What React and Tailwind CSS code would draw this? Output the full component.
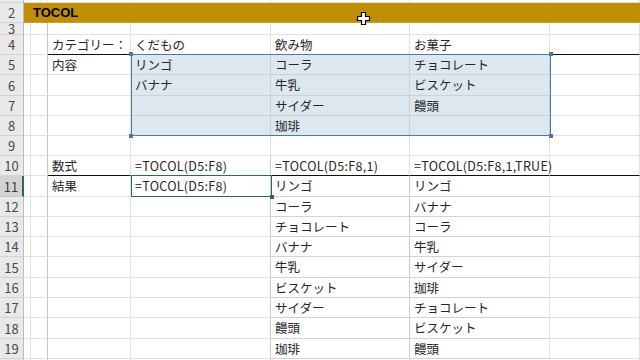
import React from 'react';

// column widths, A..G (row header is drawn separately)
const COLS = [
  { key: 'A', w: 'w-[7px]' },
  { key: 'B', w: 'w-[17px]' },
  { key: 'C', w: 'w-[83px]' },
  { key: 'D', w: 'w-[140px]' },
  { key: 'E', w: 'w-[139px]' },
  { key: 'F', w: 'w-[140px]' },
  { key: 'G', w: 'flex-1' },
];

// rows 1 and 20 are only a sliver at the edges, so no number is shown for them
const ROWS = [
  { n: 1, h: 'h-[3px]', hideNum: true },
  { n: 2, h: 'h-[20px]', B: 'TOCOL' },
  { n: 3, h: 'h-[12px]' },
  { n: 4, h: 'h-[20px]', C: 'カテゴリー：', D: 'くだもの', E: '飲み物', F: 'お菓子' },
  { n: 5, h: 'h-[20px]', C: '内容', D: 'リンゴ', E: 'コーラ', F: 'チョコレート' },
  { n: 6, h: 'h-[21px]', D: 'バナナ', E: '牛乳', F: 'ビスケット' },
  { n: 7, h: 'h-[20px]', E: 'サイダー', F: '饅頭' },
  { n: 8, h: 'h-[20px]', E: '珈琲' },
  { n: 9, h: 'h-[20px]' },
  { n: 10, h: 'h-[20px]', C: '数式', D: '=TOCOL(D5:F8)', E: '=TOCOL(D5:F8,1)', F: '=TOCOL(D5:F8,1,TRUE)' },
  { n: 11, h: 'h-[21px]', C: '結果', D: '=TOCOL(D5:F8)', E: 'リンゴ', F: 'リンゴ' },
  { n: 12, h: 'h-[20px]', E: 'コーラ', F: 'バナナ' },
  { n: 13, h: 'h-[20px]', E: 'チョコレート', F: 'コーラ' },
  { n: 14, h: 'h-[20px]', E: 'バナナ', F: '牛乳' },
  { n: 15, h: 'h-[21px]', E: '牛乳', F: 'サイダー' },
  { n: 16, h: 'h-[20px]', E: 'ビスケット', F: '珈琲' },
  { n: 17, h: 'h-[20px]', E: 'サイダー', F: 'チョコレート' },
  { n: 18, h: 'h-[21px]', E: '饅頭', F: 'ビスケット' },
  { n: 19, h: 'h-[20px]', E: '珈琲', F: '饅頭' },
  { n: 20, h: 'h-[20px]', hideNum: true },
];

const inSel = (n, c) => n >= 5 && n <= 8 && ['D', 'E', 'F'].includes(c);

function cellClass(n, c) {
  if (n === 2) return 'bg-[#bf8f00] border-b border-b-[#c99f2a]';

  let bg = 'bg-white';
  let right = 'border-r-[#e2e2e2]';
  let bottom = 'border-b-[#e2e2e2]';

  if (inSel(n, c)) {
    bg = 'bg-[#dde7f0]';
    right = 'border-r-[#c7d2dc]';
    bottom = 'border-b-[#c7d2dc]';
  }
  if (c === 'B' && n >= 3) right = 'border-r-[#c4c4c4]';
  if ((c === 'D' && n >= 10) || (c === 'E' && n >= 11)) right = 'border-r-[#cdcdcd]';
  if ((c === 'E' || c === 'F') && n >= 11) bottom = 'border-b-[#d2d2d2]';
  if ((n === 4 || n === 10) && ['C', 'D', 'E', 'F', 'G'].includes(c)) bottom = 'border-b-[#111]';

  return `${bg} border-r border-b ${right} ${bottom}`;
}

function RowHeader({ row }) {
  const active = row.n === 11;
  return (
    <div
      className={
        active
          ? 'w-[24px] h-full shrink-0 flex items-center justify-center overflow-hidden bg-[#d3d3d3] border-b border-b-[#c8c8c8] border-r-2 border-r-[#217346] text-[13px] text-[#3c3c3c]'
          : 'w-[24px] h-full shrink-0 flex items-center justify-center overflow-hidden bg-[#e9e9e9] border-b border-b-[#d2d2d2] border-r border-r-[#bcbcbc] text-[13px] text-[#4a4a4a]'
      }
    >
      {!row.hideNum && row.n}
    </div>
  );
}

function CellText({ n, text }) {
  if (n === 2) {
    return (
      <span className="relative z-10 pl-[2px] font-bold text-[13px] text-black font-['Liberation_Sans',sans-serif]">
        {text}
      </span>
    );
  }
  // formulas are latin only and run a little wider than the kana
  const latin = text.startsWith('=');
  return (
    <span
      className={
        latin
          ? 'relative z-10 pl-[4px] pt-[1px] text-[12.5px] tracking-[0.3px] text-[#262626]'
          : 'relative z-10 pl-[4px] pt-[1px] text-[12.5px] text-[#262626]'
      }
    >
      {text}
    </span>
  );
}

function Row({ row }) {
  return (
    <div className={`flex ${row.h} shrink-0`}>
      <RowHeader row={row} />
      {COLS.map((col) => (
        <div
          key={col.key}
          className={`${col.w} h-full shrink-0 flex items-center whitespace-nowrap overflow-visible ${cellClass(row.n, col.key)}`}
        >
          {row[col.key] && <CellText n={row.n} text={row[col.key]} />}
        </div>
      ))}
    </div>
  );
}

export default function App() {
  return (
    <div className="relative w-[640px] h-[360px] overflow-hidden bg-white font-['Noto_Sans_CJK_JP','Noto_Sans',sans-serif] leading-none">
      <div className="flex flex-col">
        {ROWS.map((row) => (
          <Row key={row.n} row={row} />
        ))}
      </div>

      {/* referenced range D5:F8 with its corner handles */}
      <div className="absolute left-[131px] top-[54px] w-[420px] h-[82px] border border-[#4f77a0] z-20">
        <div className="absolute -left-[3px] -top-[3px] w-[4px] h-[4px] bg-[#4f77a0]" />
        <div className="absolute -right-[3px] -top-[3px] w-[4px] h-[4px] bg-[#4f77a0]" />
        <div className="absolute -left-[3px] -bottom-[3px] w-[4px] h-[4px] bg-[#4f77a0]" />
        <div className="absolute -right-[3px] -bottom-[3px] w-[4px] h-[4px] bg-[#4f77a0]" />
      </div>

      {/* active cell D11 with fill handle */}
      <div className="absolute left-[131px] top-[175px] w-[141px] h-[22px] border border-[#217346] z-20">
        <div className="absolute -right-[3px] -bottom-[3px] w-[4px] h-[4px] bg-[#217346]" />
      </div>

      {/* mouse cursor */}
      <svg className="absolute left-[356px] top-[11px] z-30" width="15" height="15" viewBox="0 0 15 15">
        <path
          d="M5.5 1.5h4v4h4v4h-4v4h-4v-4h-4v-4h4z"
          fill="#fff"
          stroke="#000"
          strokeWidth="1.2"
          strokeLinejoin="miter"
        />
      </svg>
    </div>
  );
}
